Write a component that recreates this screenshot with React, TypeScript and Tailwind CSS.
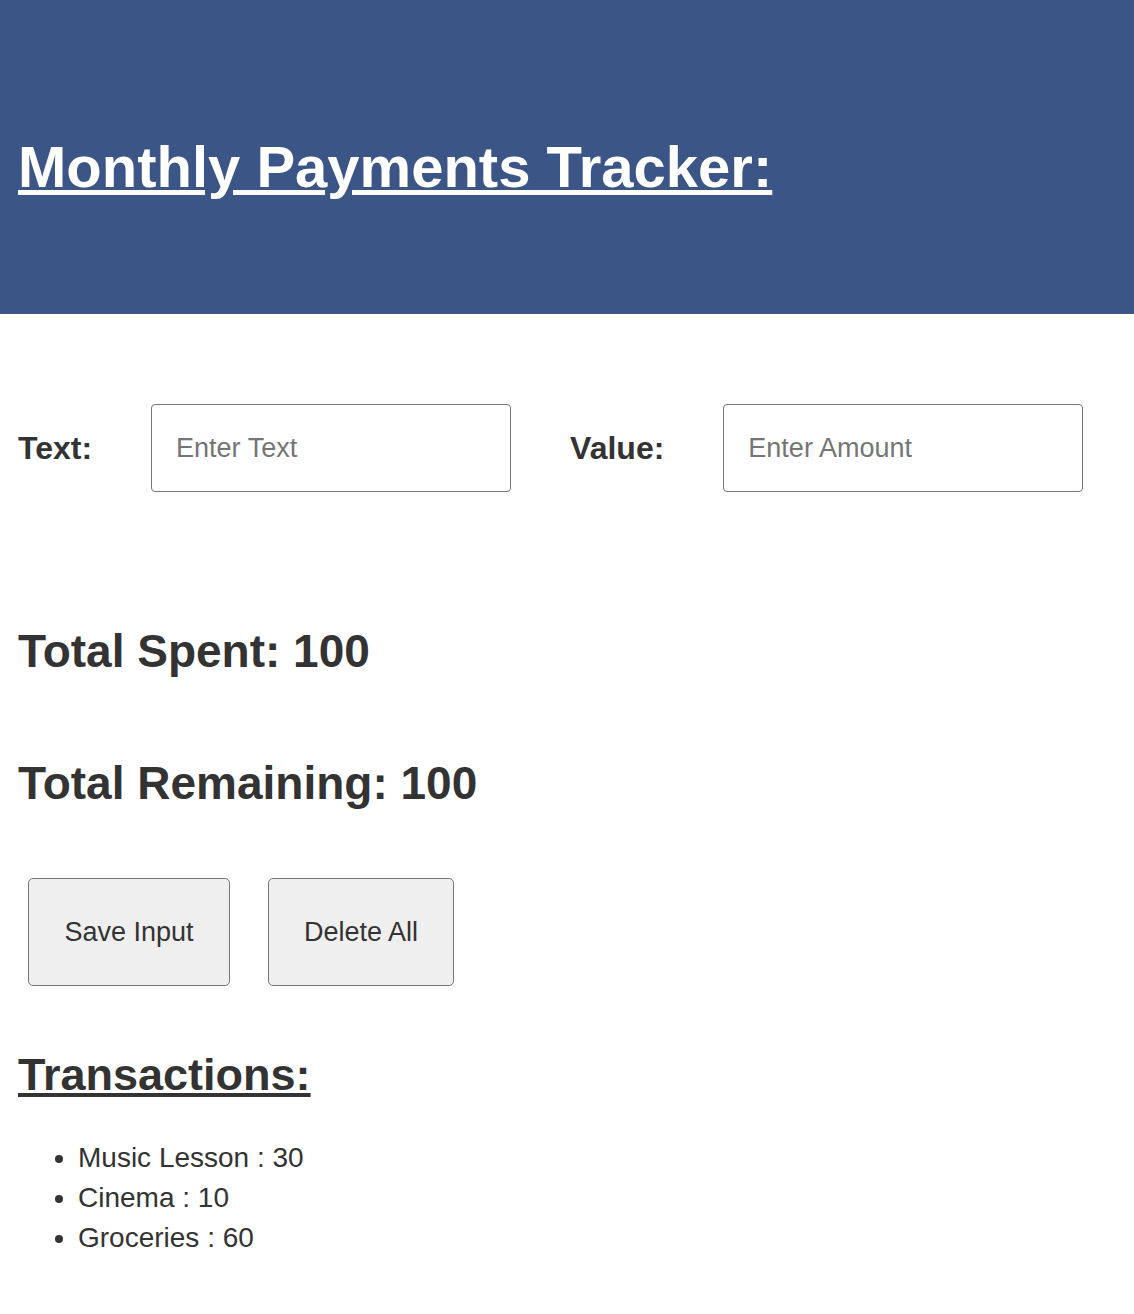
import React from "react";

const transactions = [
  { text: "Music Lesson", value: 30 },
  { text: "Cinema", value: 10 },
  { text: "Groceries", value: 60 },
];

export default function App() {
  return (
    <div className="min-h-[1314px] bg-white font-['Liberation_Sans',Arial,sans-serif] text-[#333]">
      <header className="h-[314px] bg-[#3b5586] px-[18px] pt-[138px]">
        <h1 className="text-[58px] font-bold leading-none text-white underline">Monthly Payments Tracker:</h1>
      </header>

      <main className="px-[18px]">
        <div className="mt-[90px] flex items-center gap-[59px]">
          <label className="text-[32px] font-bold">Text:</label>
          <input
            className="h-[88px] w-[360px] rounded-[4px] border border-[#767676] px-[24px] text-[27px] placeholder:text-[#757575]"
            placeholder="Enter Text"
          />
          <label className="text-[32px] font-bold">Value:</label>
          <input
            className="h-[88px] w-[360px] rounded-[4px] border border-[#767676] px-[24px] text-[27px] placeholder:text-[#757575]"
            placeholder="Enter Amount"
          />
        </div>

        <h2 className="mt-[136px] text-[46px] font-bold leading-none">Total Spent: 100</h2>
        <h2 className="mt-[86px] text-[46px] font-bold leading-none">Total Remaining: 100</h2>

        <div className="ml-[10px] mt-[72px] flex gap-[38px]">
          <button className="h-[108px] w-[202px] rounded-[5px] border border-[#767676] bg-[#efefef] text-[27px]">Save Input</button>
          <button className="h-[108px] w-[186px] rounded-[5px] border border-[#767676] bg-[#efefef] text-[27px]">Delete All</button>
        </div>

        <h2 className="mt-[66px] text-[45px] font-bold leading-none underline">Transactions:</h2>
        <ul className="mt-[41px] list-disc pl-[60px] text-[28px] leading-[40px]">
          {transactions.map((t) => (
            <li key={t.text}>
              {t.text} : {t.value}
            </li>
          ))}
        </ul>
      </main>
    </div>
  );
}
